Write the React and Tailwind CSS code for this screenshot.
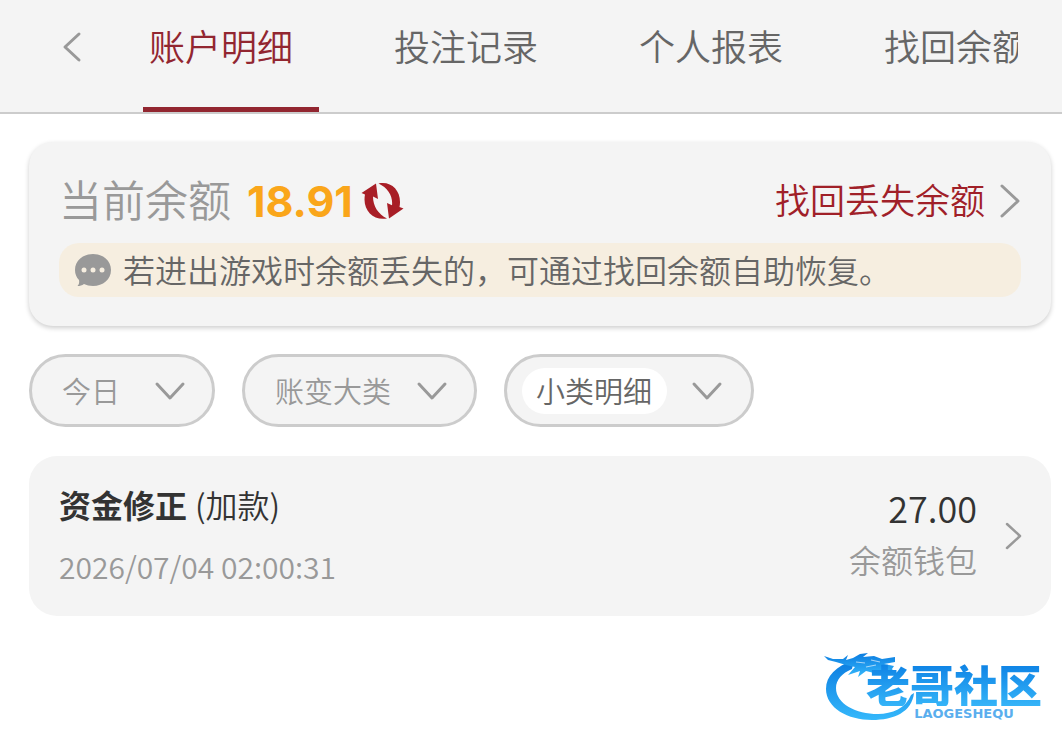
import { useState } from "react";

const TABS = ["账户明细", "投注记录", "个人报表", "找回余额"];

const RECORDS = [
  {
    id: 1,
    title: "资金修正",
    type: "(加款)",
    time: "2026/07/04 02:00:31",
    amount: "27.00",
    wallet: "余额钱包",
  },
];

function Chevron({ points, className, width = 3 }) {
  return (
    <svg className={className} fill="none" stroke="#999999" strokeWidth={width} strokeLinecap="round" strokeLinejoin="round" aria-hidden="true">
      <polyline points={points} />
    </svg>
  );
}

function RefreshIcon() {
  return (
    <svg className="h-[38px] w-[43px]" viewBox="0 0 43 38" fill="#a81e26" aria-hidden="true">
      <path d="M0.500 11 L15 1.500 L17 17 L12 14.500 C12 24 17 32 26 36.500 C12 39 1 28 4 12.500 Z" />
      <path d="M42.500 26.500 L28 36.500 L26 21 L31 23.200 C32 14 27 6 17.500 1.500 C31 -1.500 41.500 10 38.500 25 Z" />
    </svg>
  );
}

function MessageIcon() {
  return (
    <svg className="h-8 w-9 shrink-0" viewBox="0 0 36 32" aria-hidden="true">
      <path d="M18 0 C28 0 36 6.500 36 16 C36 25.500 28 32 18 32 C14.500 32 11.500 31.300 9 30 C7 31.500 5 32 2.500 32 C4 30.500 4.500 28.500 4 26 C1.500 23.500 0 20 0 16 C0 6.500 8 0 18 0 Z" fill="#999999" />
      <circle cx="9" cy="16" r="2.500" fill="#f6eee0" />
      <circle cx="18" cy="16" r="2.500" fill="#f6eee0" />
      <circle cx="27" cy="16" r="2.500" fill="#f6eee0" />
    </svg>
  );
}

function Header() {
  const [active, setActive] = useState(0);

  return (
    <header className="flex h-[114px] border-b-2 border-[#cccccc] bg-[#f4f4f4] pr-11">
      <button type="button" aria-label="返回" className="w-[143px] shrink-0 pb-[18px] pl-[62px]">
        <Chevron className="h-8 w-5" points="17,3 3,16 17,29" />
      </button>
      <nav className="flex min-w-0 flex-1 gap-[69px] overflow-x-auto overflow-y-hidden [scrollbar-width:none]">
        {TABS.map((tab, i) => (
          <button
            key={tab}
            type="button"
            onClick={() => setActive(i)}
            className={
              i === active
                ? "w-44 shrink-0 border-b-5 border-[#922630] pb-[18px] pl-1.5 text-left text-4xl text-[#922630]"
                : "w-44 shrink-0 border-b-5 border-transparent pb-[18px] pl-1.5 text-left text-4xl text-[#666666]"
            }
          >
            {tab}
          </button>
        ))}
      </nav>
    </header>
  );
}

function BalanceCard() {
  return (
    <section className="rounded-3xl bg-[#f4f4f4] px-[30px] pt-[31px] pb-[29px] shadow-[0_2px_5px_rgba(0,0,0,0.2)]">
      <div className="flex h-14 items-center">
        <span className="pb-1.5 text-[43px] text-[#999999]">当前余额</span>
        <span className="ml-4 font-[Inter] text-[43px] font-bold text-[#faa61a]">18.91</span>
        <button type="button" aria-label="刷新余额" className="ml-2">
          <RefreshIcon />
        </button>
        <a href="#recover" className="ml-auto flex items-center gap-3 text-[35px] text-[#a02028]">
          <span className="pb-1">找回丢失余额</span>
          <Chevron className="h-9 w-6" points="5,3 21,18 5,33" />
        </a>
      </div>
      <p className="mt-3.5 flex h-[54px] items-center gap-3 rounded-[20px] bg-[#f6eee0] px-4 text-[32px] text-[#666666]">
        <MessageIcon />
        <span className="pb-0.5">若进出游戏时余额丢失的，可通过找回余额自助恢复。</span>
      </p>
    </section>
  );
}

function Filter({ name, label, selected }) {
  return (
    <label
      className={
        selected
          ? "flex h-[73px] items-center justify-between gap-6 rounded-full border-3 border-[#cccccc] bg-[#f4f4f4] pr-7 pl-[15px]"
          : "flex h-[73px] min-w-[186px] items-center justify-between gap-6 rounded-full border-3 border-[#cccccc] bg-[#f4f4f4] pr-[26px] pl-[30px]"
      }
    >
      <select
        name={name}
        aria-label={label}
        className={
          selected
            ? "h-[46px] appearance-none rounded-full bg-white px-3.5 text-[29px] text-[#666666] outline-none"
            : "h-[46px] appearance-none text-[29px] text-[#999999] outline-none"
        }
      >
        <option>{label}</option>
      </select>
      <Chevron className="pointer-events-none h-5 w-8" points="3,3 16,17 29,3" />
    </label>
  );
}

function RecordRow({ record }) {
  return (
    <li>
      <a href="#record" className="flex h-40 items-center rounded-[28px] bg-[#f4f4f4] pr-[27px] pl-[30px]">
        <div className="flex flex-col gap-4 pb-0.5">
          <p className="flex items-center gap-2 text-[32px] leading-[46px] text-[#333333]">
            <span className="font-bold">{record.title}</span>
            <span>{record.type}</span>
          </p>
          <time className="text-[30px] leading-[46px] text-[#999999]">{record.time}</time>
        </div>
        <div className="ml-auto flex flex-col items-end gap-1.5 pb-1.5">
          <span className="text-4xl leading-[46px] text-[#333333]">{record.amount}</span>
          <span className="text-[32px] leading-[46px] text-[#999999]">{record.wallet}</span>
        </div>
        <Chevron className="ml-[27px] h-8 w-5" points="3,4 16,16 3,28" width={2.5} />
      </a>
    </li>
  );
}

function CommunityLogo() {
  return (
    <div className="flex items-start">
      <svg className="h-[72px] w-[92px]" viewBox="0 0 92 72" aria-hidden="true">
        <defs>
          <linearGradient id="dragon" x1="0" y1="0" x2="0" y2="1">
            <stop offset="0" stopColor="#0b7ce0" />
            <stop offset="1" stopColor="#35b8fb" />
          </linearGradient>
        </defs>
        <g fill="url(#dragon)">
          <path d="M30 8 C12 14 2 24 2 37 C2 56 24 68 48 68 C70 68 88 60 90 41 L87 43 C82 56 68 62 54 62 C32 62 12 52 12 36 C12 28 18 21 28 17 Z" />
          <path d="M0 4 L9 7 L19 7 L24 3 L22 8 L29 6 L36 2 L44 1 L39 5 L50 4 L58 7 L71 5 L71 10 L60 12 L70 14 L68 17 L70 20 L58 18 L50 21 L42 19 L34 25 L36 19 L24 23 L31 15 L22 13 L12 10 L4 8 Z" />
        </g>
        <path d="M32 10 L41 11 M42 15 L52 13 M47 8 L56 10" stroke="#ffffff" strokeWidth="1.200" opacity="0.6" />
      </svg>
      <div className="-ml-[50px] flex flex-col items-center pt-2.5">
        <span className="bg-linear-to-b from-[#0b80e4] to-[#35b4f8] bg-clip-text text-[44px] leading-[44px] font-black text-transparent">老哥社区</span>
        <span className="pl-5 font-['DejaVu_Sans'] text-[13px] leading-4 font-bold text-[#5aaeee]">LAOGESHEQU</span>
      </div>
    </div>
  );
}

export default function App() {
  return (
    <div className="min-h-screen bg-white font-['Noto_Sans_CJK_SC',sans-serif] font-[350]">
      <Header />
      <main className="pt-7 pr-[11px] pl-[29px]">
        <BalanceCard />
        <div className="mt-7 flex flex-wrap gap-[27px]">
          <Filter name="date" label="今日" />
          <Filter name="category" label="账变大类" />
          <Filter name="detail" label="小类明细" selected />
        </div>
        <ul className="mt-[29px]">
          {RECORDS.map((record) => (
            <RecordRow key={record.id} record={record} />
          ))}
        </ul>
      </main>
      <footer className="flex justify-end pt-9 pr-5">
        <CommunityLogo />
      </footer>
    </div>
  );
}
